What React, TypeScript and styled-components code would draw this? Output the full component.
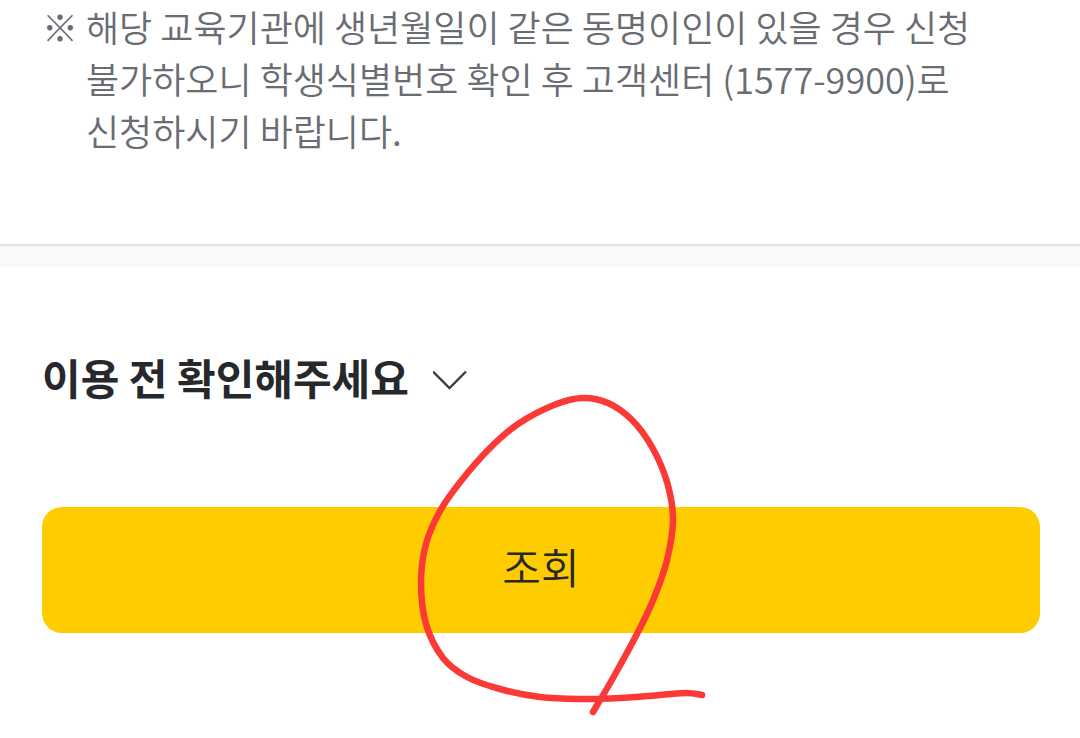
import React from 'react';
import styled, { createGlobalStyle } from 'styled-components';

const GlobalStyle = createGlobalStyle`
  * { box-sizing: border-box; }
  body {
    margin: 0;
    background: #fff;
    color: #26282c;
    font-family: "Noto Sans CJK KR", sans-serif;
    overflow-x: hidden;
  }
`;

const Page = styled.main`
  position: relative;
`;

const Notice = styled.p`
  display: flex;
  gap: 12px;
  margin: 0;
  padding: 0 42px 88px;
  border-bottom: 2px solid #e2e5e8;
  color: #696c72;
  font-size: 36px;
  font-weight: 350;
  line-height: 52px;
`;

const Mark = styled.span`
  flex: none;
  width: 32px;
`;

const Divider = styled.div`
  height: 21px;
  background: #f8f9fb;
`;

const Section = styled.section`
  padding: 80px 40px 104px 42px;
`;

const Title = styled.h2`
  margin: 0 0 100px;
  font-size: 42px;
  font-weight: 700;
  line-height: 60px;
`;

const Toggle = styled.button`
  display: flex;
  align-items: center;
  gap: 24px;
  padding: 0;
  border: 0;
  background: none;
  color: inherit;
  font: inherit;
`;

const Submit = styled.button`
  display: block;
  width: 100%;
  padding: 28px 32px 36px;
  border: 0;
  border-radius: 20px;
  background: #ffcc00;
  color: #26282c;
  font-family: inherit;
  font-size: 42px;
  font-weight: 350;
  line-height: 62px;
`;

const Scribble = styled.svg`
  position: absolute;
  top: 390px;
  left: 50%;
  margin-left: -130px;
  pointer-events: none;
`;

type Point = [number, number];

const stroke: Point[] = [
  [593, 712], [613, 678], [638, 632], [654, 598], [667, 560], [673, 520],
  [667, 482], [652, 447], [632, 420], [608, 403], [582, 398], [554, 405],
  [518, 424], [489, 449], [461, 481], [440, 511], [426, 544], [421, 582],
  [426, 624], [443, 658], [467, 677], [500, 689], [540, 697], [580, 699],
  [620, 698], [660, 695], [687, 693], [702, 695],
];

// Catmull-Rom spline through the pen points, as cubic Bézier segments.
function smooth(points: Point[]) {
  let d = `M${points[0].join(' ')}`;
  for (let i = 0; i < points.length - 1; i++) {
    const a = points[Math.max(i - 1, 0)];
    const b = points[i];
    const c = points[i + 1];
    const e = points[Math.min(i + 2, points.length - 1)];
    d += `C${b[0] + (c[0] - a[0]) / 6} ${b[1] + (c[1] - a[1]) / 6} ${c[0] - (e[0] - b[0]) / 6} ${c[1] - (e[1] - b[1]) / 6} ${c[0]} ${c[1]}`;
  }
  return d;
}

export default function App() {
  return (
    <Page>
      <GlobalStyle />
      <Notice>
        <Mark>※</Mark>
        <span>
          해당 교육기관에 생년월일이 같은 동명이인이 있을 경우 신청<br />
          불가하오니 학생식별번호 확인 후 고객센터 (1577-9900)로<br />
          신청하시기 바랍니다.
        </span>
      </Notice>
      <Divider />
      <Section>
        <Title>
          <Toggle type="button" aria-expanded="false">
            이용 전 확인해주세요
            <svg width="36" height="28" viewBox="0 0 36 28" fill="none" stroke="#3a3c40" strokeWidth="2.3" aria-hidden="true">
              <path d="M0 8.5 16.5 25 33 8.5" />
            </svg>
          </Toggle>
        </Title>
        <Submit type="button">조회</Submit>
      </Section>
      <Scribble width="300" height="330" viewBox="410 390 300 330" fill="none" stroke="#fb3a38" strokeWidth="6.5" strokeLinecap="round" strokeLinejoin="round" aria-hidden="true">
        <path d={smooth(stroke)} />
      </Scribble>
    </Page>
  );
}
